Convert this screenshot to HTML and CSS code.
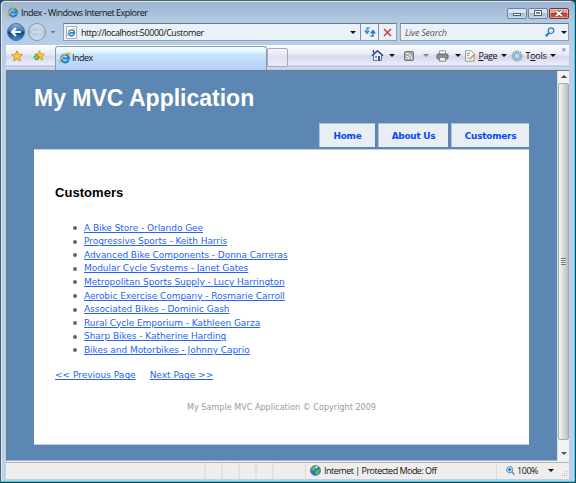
FILE: index.html
```
<!DOCTYPE html>
<html lang="en">
<head>
<meta charset="utf-8">
<title>Index</title>
<link rel="stylesheet" href="styles.css">
</head>
<body>
<svg width="0" height="0" class="defs">
  <defs>
    <linearGradient id="blue" x1="0" y1="0" x2="0" y2="1"><stop offset="0" stop-color="#8fb4df"/><stop offset=".45" stop-color="#3c74b8"/><stop offset=".5" stop-color="#0e3a8c"/><stop offset="1" stop-color="#2b9be0"/></linearGradient>
    <linearGradient id="pale" x1="0" y1="0" x2="0" y2="1"><stop offset="0" stop-color="#d6e2ef"/><stop offset=".5" stop-color="#b4c5d8"/><stop offset="1" stop-color="#d3e0ee"/></linearGradient>
    <symbol id="ie" viewBox="0 0 12 12">
      <path d="M9.700 8A3.900 3.900 0 1 1 10 6.400H4" fill="none" stroke="#2386d6" stroke-width="2.200"/>
      <path d="M1.800 11.300C-.8 10.800 1.500 6 5 3.200S12 .2 11 3" fill="none" stroke="#e9b52c" stroke-width="1.300"/>
    </symbol>
    <symbol id="star" viewBox="0 0 12 12"><path d="M6 .7l1.500 3.500 3.900.4-2.900 2.600.9 3.800L6 9 2.600 11l.9-3.800L.6 4.600l3.900-.4z" fill="#ffc438" stroke="#c98a1c" stroke-width=".8"/></symbol>
  </defs>
</svg>
<div class="window">
  <div class="titlebar">
    <svg class="ie"><use href="#ie"/></svg>
    <span class="caption">Index - Windows Internet Explorer</span>
    <div class="controls"><i class="ctl"><b class="min"></b></i><i class="ctl"><b class="max"></b></i><i class="ctl close"><svg width="10" height="7" viewBox="0 0 10 7"><path d="M2 1l6 5M8 1L2 6" stroke="#6d3030" stroke-width="3"/><path d="M2 1l6 5M8 1L2 6" stroke="#fff" stroke-width="1.800"/></svg></i></div>
  </div>
  <div class="navrow">
    <svg class="travel" width="50" height="20" viewBox="0 0 50 20">
      <circle cx="9" cy="10" r="8.500" fill="url(#blue)" stroke="#55718f"/>
      <path d="M14 10H5.500M9 6L5 10l4 4" fill="none" stroke="#fff" stroke-width="2.200"/>
      <circle cx="30" cy="10" r="8.500" fill="url(#pale)" stroke="#8295aa"/>
      <path d="M25 10h9M31 6l4 4-4 4" fill="none" stroke="#c9d7e6" stroke-width="2"/>
      <path d="M43.500 9h5L46 11.500z" fill="#3d86b8"/>
    </svg>
    <div class="address">
      <span class="favicon"><svg width="9" height="9"><use href="#ie"/></svg></span>
      <span class="url">http://localhost:50000/Customer</span>
      <i class="arrow"></i>
      <span class="cell"><svg width="12" height="12" viewBox="0 0 12 12"><path d="M5.500 2H3v5M.8 4.500L3 7.500l2.200-3" fill="none" stroke="#3c8ccc" stroke-width="1.300"/><path d="M6.500 10H9V5M6.800 7.500L9 4.500l2.200 3" fill="none" stroke="#2874b8" stroke-width="1.300"/></svg></span>
      <span class="cell stop"><svg width="9" height="9" viewBox="0 0 9 9"><path d="M1 1l7 7M8 1L1 8" stroke="#d33b3b" stroke-width="1.500"/></svg></span>
    </div>
    <div class="search"><span>Live Search</span><svg width="10" height="10" viewBox="0 0 10 10"><path d="M.8 9.200L4.500 5.500" stroke="#3471b5" stroke-width="2"/><circle cx="6" cy="3.700" r="2.800" fill="#dcecfa" stroke="#3471b5" stroke-width="1.200"/></svg><i class="arrow"></i></div>
  </div>
  <div class="tabbar">
    <div class="favs"><svg width="12" height="12"><use href="#star"/></svg><svg width="12" height="12" viewBox="0 0 12 12"><use href="#star" x="1" width="11" height="11"/><path d="M3.500 4.500v5.500M.8 7.200h5.400" stroke="#3f9a30" stroke-width="2.600"/><path d="M3.500 5.200v4M1.500 7.200h4" stroke="#7fd860" stroke-width="1.400"/></svg></div>
    <div class="tab"><svg class="ie"><use href="#ie"/></svg><span>Index</span></div>
    <div class="newtab"></div>
    <div class="commands">
      <svg class="home" width="13" height="13" viewBox="0 0 13 13"><path d="M2.500 6v5.500h8V6L6.500 2.500z" fill="#e8ebf3" stroke="#67718c"/><path d="M.8 6.800L6.500 1.600l5.700 5.200M2.500 4V1" fill="none" stroke="#3144a0" stroke-width="1.300"/><path d="M7 7h2v4.500H7z" fill="#46506a"/><path d="M4 7h2v2H4z" fill="#68a2d8"/></svg><i class="arrow"></i>
      <svg class="feed" width="10" height="10" viewBox="0 0 10 10"><rect x=".5" y=".5" width="9" height="9" rx="1" fill="#a8a8a8" stroke="#777"/><path d="M2 2.300a5.700 5.700 0 0 1 5.700 5.700M2 5a3 3 0 0 1 3 3" fill="none" stroke="#fff"/><circle cx="2.600" cy="7.500" r=".8" fill="#fff"/></svg><i class="arrow dim"></i>
      <svg class="print" width="13" height="12" viewBox="0 0 13 12"><path d="M3.500 4V.8h6V4" fill="#fff" stroke="#999"/><rect x="1" y="4" width="11" height="5" rx="1" fill="#8b9098" stroke="#666"/><path d="M3.500 7.500h6v3.700h-6z" fill="#eee" stroke="#888"/></svg><i class="arrow"></i>
      <svg class="page" width="12" height="12" viewBox="0 0 12 12"><path d="M1.500.8h5.800L10 3.500v7.700H1.500z" fill="#fafafa" stroke="#9598a5"/><path d="M3 3.500h3M3 5.500h2M3 8h2" stroke="#7991b5"/><path d="M5.500 9.500L10.800 4" stroke="#cda333" stroke-width="1.800"/></svg><span class="ptext"><u>P</u>age</span><i class="arrow"></i>
      <svg class="gear" width="12" height="12" viewBox="0 0 12 12"><circle cx="6" cy="6" r="4.800" fill="none" stroke="#7fa1bd" stroke-width="1.600" stroke-dasharray="1.500 1"/><circle cx="6" cy="6" r="3.300" fill="#e2edf5" stroke="#94b4cc" stroke-width="2"/><circle cx="6" cy="6" r="1.400" fill="#f5f9ff" stroke="#7d9fba" stroke-width=".6"/></svg><span class="ttext">T<u>o</u>ols</span><i class="arrow"></i><span class="more">»</span>
    </div>
  </div>
  <div class="view">
    <main class="site">
      <h1><span>My MVC Application</span></h1>
      <nav><a class="n1">Home</a><a class="n2">About Us</a><a class="n3">Customers</a></nav>
      <section class="panel">
        <h2>Customers</h2>
        <ul>
          <li><a>A Bike Store - Orlando Gee</a></li>
          <li><a>Progressive Sports - Keith Harris</a></li>
          <li><a>Advanced Bike Components - Donna Carreras</a></li>
          <li><a>Modular Cycle Systems - Janet Gates</a></li>
          <li><a>Metropolitan Sports Supply - Lucy Harrington</a></li>
          <li><a>Aerobic Exercise Company - Rosmarie Carroll</a></li>
          <li><a>Associated Bikes - Dominic Gash</a></li>
          <li><a>Rural Cycle Emporium - Kathleen Garza</a></li>
          <li><a>Sharp Bikes - Katherine Harding</a></li>
          <li><a>Bikes and Motorbikes - Johnny Caprio</a></li>
        </ul>
        <div class="pager"><a>&lt;&lt; Previous Page</a><a>Next Page &gt;&gt;</a></div>
        <footer>My Sample MVC Application © Copyright 2009</footer>
      </section>
    </main>
    <div class="scroll"><i class="up"></i><div class="thumb"><b></b></div><i class="down"></i></div>
  </div>
  <div class="status">
    <div class="blank"></div><div class="slot"></div><div class="slot"></div><div class="slot"></div><div class="slot"></div><div class="slot last"></div>
    <div class="zone"><svg width="11" height="11" viewBox="0 0 11 11"><circle cx="5.500" cy="5.500" r="5" fill="#2876c8" stroke="#4b7198" stroke-width=".7"/><path d="M2 2l3-1 1 2-2 3-3-1zM7 5l3-1-1 4-3 2-1-3z" fill="#65ba43"/><path d="M5 1.500l2-.5 1 1.500-2 1z" fill="#d3efff"/></svg><span>Internet | Protected Mode: Off</span></div>
    <div class="zoom"><svg width="9" height="9" viewBox="0 0 9 9"><path d="M5.500 5.500l3 3" stroke="#72869b" stroke-width="1.400"/><circle cx="3.700" cy="3.700" r="3.100" fill="#bee0ff" stroke="#4b91cf"/><path d="M3.700 2v3.400M2 3.700h3.400" stroke="#1764b1"/></svg><span>100%</span><i class="arrow"></i><svg class="grip" width="6" height="6" viewBox="0 0 6 6"><path d="M4 0h1v1H4zM2 2h1v1H2zM4 2h1v1H4zM0 4h1v1H0zM2 4h1v1H2zM4 4h1v1H4z" fill="#b5b5b5"/></svg></div>
  </div>
</div>
</body>
</html>
```
FILE: styles.css
```
* { box-sizing: border-box; }
body { margin: 0; width: 576px; height: 483px; overflow: hidden; background: #07505b; }
.defs { position: absolute; }
svg { flex: none; display: block; }
.window { width: 575px; height: 482px; padding: 1px 5px 4px; border: 1px solid #555c65; border-right-color: #4ed0ee; border-bottom-color: #45cce5; border-radius: 5px 5px 0 0; background: linear-gradient(#9bb4cf 0, #b4cbe5 22px, #b9d1ea 75px, #b9d1ea); box-shadow: inset 1px 1px #dbeaf8; font: 9px "Open Sans", "Noto Sans", sans-serif; color: #111; }
.titlebar { height: 20px; display: flex; align-items: center; padding-left: 1px; }
.ie { width: 12px; height: 12px; }
.caption { margin-left: 2px; white-space: nowrap; width: 372px; letter-spacing: -.5px; }
.controls { display: flex; gap: 1px; margin: 2px 0 0 auto; }
.ctl { width: 20px; height: 11px; border: 1px solid #6d8197; border-radius: 2px; background: linear-gradient(#d8e6f4 45%, #a9bfd7 50%, #bdd1e5); display: flex; align-items: center; justify-content: center; box-shadow: inset 0 0 0 1px #dae7f480; }
.ctl.close { background: linear-gradient(#dc9d91 45%, #bd3c29 50%, #cf6247); border-color: #77352e; }
.min { width: 8px; height: 3px; border: 1px solid #555f6b; background: #fff; margin-top: 3px; }
.max { width: 8px; height: 6px; border: 1px solid #555f6b; background: #71859b; box-shadow: inset 0 0 0 1px #fff; }
.navrow { height: 20px; display: flex; align-items: center; }
.travel { margin-left: 1px; }
.address { margin-left: 6px; width: 334px; height: 18px; border: 1px solid #8fa0b2; border-top-color: #68798b; background: #eaf1f9; display: flex; align-items: center; flex: none; }
.favicon { margin-left: 2px; width: 11px; height: 13px; background: #fff; border: 1px solid #abb4be; display: flex; align-items: center; flex: none; }
.url { margin-left: 4px; width: 270px; letter-spacing: -.45px; white-space: nowrap; }
.arrow { width: 0; height: 0; border: 3px solid transparent; border-top-color: #111; border-bottom: 0; flex: none; }
.cell { border-left: 1px solid #8393a3; width: 18px; height: 16px; display: flex; align-items: center; justify-content: center; flex: none; margin-left: 4px; }
.cell.stop { margin: 0; }
.search { margin-left: 3px; width: 169px; height: 18px; border: 1px solid #8fa0b2; border-top-color: #68798b; background: #eaf1f9; display: flex; align-items: center; padding-left: 4px; }
.search span { width: 140px; font-style: italic; color: #555; letter-spacing: -.25px; }
.search .arrow { margin-left: 6px; }
.tabbar { height: 25px; margin-top: 3px; display: flex; background: linear-gradient(#fff 0, #e5e9f5 10px, #d2d8ec 11px, #eceef9 20px, #a5b7da 21px, #cad9f5 22px, #bed1f4 25px); }
.favs { width: 49px; padding: 5px 0 0 5px; display: flex; gap: 10px; }
.tab { width: 213px; height: 24px; margin-top: 1px; border: 1px solid #8b99ad; border-bottom: 0; border-radius: 3px 3px 0 0; background: linear-gradient(#f5ffff, #e1f3ff 6px, #c7e4fd 7px, #b4cff8); display: flex; align-items: center; padding-left: 3px; }
.tab span { margin-left: 1px; padding-bottom: 2px; letter-spacing: -.5px; }
.tab .ie { margin-bottom: 2px; }
.newtab { width: 21px; height: 19px; margin-top: 3px; border: 1px solid #a6abba; border-radius: 2px; background: linear-gradient(#f3f4fb, #e0e3f1 50%, #e8ebf6); }
.commands { width: 281px; height: 21px; display: flex; align-items: center; padding-left: 83px; }
.home + .arrow { margin-left: 5px; }
.feed { margin-left: 9px; } .feed + .arrow { margin-left: 9px; }
.arrow.dim { border-top-color: #888; }
.print { margin-left: 7px; } .print + .arrow { margin-left: 6px; }
.page { margin-left: 3px; }
.ptext { width: 20px; margin: 0 3px 0 2px; letter-spacing: -.45px; }
.gear { margin-left: 4px; }
.ttext { width: 22px; margin: 0 3px 0 2px; letter-spacing: -.25px; }
.commands u { text-underline-offset: 1px; }
.more { margin: -14px 0 0 5px; color: #5965a2; }
.view { height: 391px; display: flex; border: 1px solid #767c83; border-width: 1px 0 0 1px; }
.site { width: 550px; background: #5c87b2; border-bottom: 1px solid #9bb4cd; padding: 10px 27px 0 27px; font-family: "DejaVu Sans", sans-serif; }
h1 { margin: 0; height: 42px; color: #fff; font: bold 23px/34px "Liberation Sans", Arial, sans-serif; white-space: nowrap; }
nav { width: 495px; display: flex; justify-content: flex-end; gap: 3px; height: 24px; }
nav a { background: #e8eef4; border: 1px solid #afc4d9; border-width: 1px 0 0 1px; color: #034af3; font-size: 8.900px; font-weight: bold; text-align: center; line-height: 24px; letter-spacing: -.22px; white-space: nowrap; }
.n1 { width: 56px; } .n2 { width: 70px; } .n3 { width: 78px; }
.panel { margin: 2px 1px 0 0; width: 495px; height: 296px; border: 1px solid #bfd0e0; border-width: 1px 0; background: #fff; padding: 31px 21px 0; color: #696969; font-size: 9px; letter-spacing: -.05px; }
h2 { margin: 0; color: #000; font: bold 13px/23px "Liberation Sans", Arial, sans-serif; letter-spacing: .05px; }
ul { list-style: none; margin: 17px 0 0; padding: 0; }
li { display: flex; align-items: center; height: 13.550px; white-space: nowrap; }
li::before { content: ""; width: 4px; height: 4px; border-radius: 2px; background: #666; margin: 1px 7px 0 18px; }
.panel a { color: #2864ee; text-decoration: underline; text-decoration-thickness: 1px; text-underline-offset: 1px; }
.pager { margin-top: 11px; height: 16px; display: flex; align-items: center; gap: 14px; letter-spacing: 0; }
footer { margin-top: 18px; text-align: center; font-size: 8.050px; line-height: 14px; letter-spacing: .02px; color: #999; white-space: nowrap; }
.scroll { width: 13px; background: #f3f3f3; border-left: 1px solid #ddd; display: flex; flex-direction: column; align-items: center; }
.up, .down { width: 0; height: 0; border: 3px solid transparent; }
.up { border-top: 0; border-bottom-color: #444; margin-top: 4px; }
.down { border-bottom: 0; border-top-color: #555; margin-top: 12px; }
.thumb { width: 11px; height: 357px; margin-top: 5px; border: 1px solid #aaa; border-radius: 2px; background: linear-gradient(90deg, #f5f5f5, #ddd 45%, #bcbcbc); display: flex; align-items: center; justify-content: center; }
.thumb b { width: 5px; height: 7px; background: repeating-linear-gradient(#777 0 1px, #eee 1px 2px); }
.status { height: 17px; margin-top: 1px; background: #f0edec; border-top: 1px solid #b7b7b2; box-shadow: 0 -1px #eee; display: flex; }
.blank { width: 198px; }
.slot { width: 17px; border-left: 2px solid #e3e1e0; }
.last { width: 34px; border-right: 1px solid #dedcdb; }
.zone { width: 191px; display: flex; align-items: center; padding: 0 0 2px 4px; border-right: 1px solid #dedcdb; white-space: nowrap; }
.zone span { margin-left: 3px; letter-spacing: -.53px; }
.zoom { display: flex; align-items: center; padding: 0 0 2px 9px; }
.zoom span { width: 31px; margin-left: 2px; letter-spacing: -.45px; }
.grip { margin: 8px 0 0 8px; }
```
